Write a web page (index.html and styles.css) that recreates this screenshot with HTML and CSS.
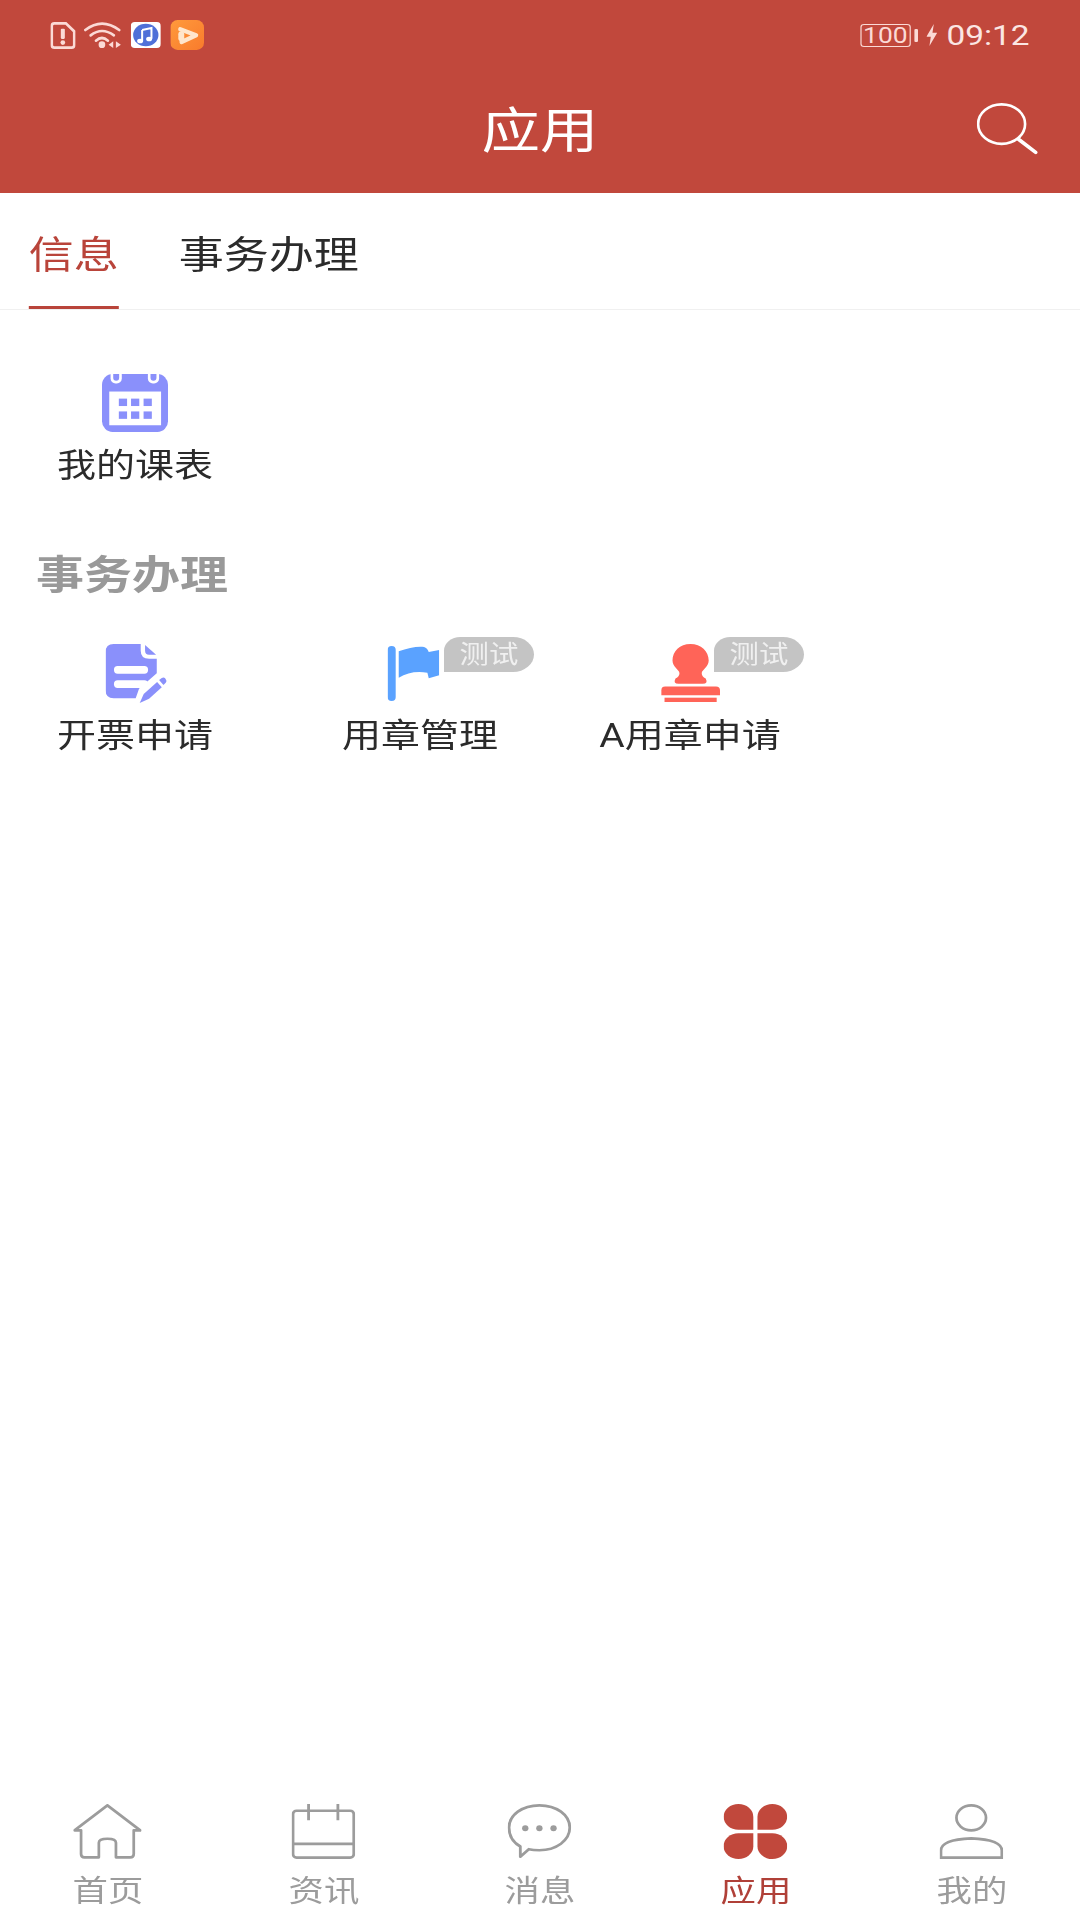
FILE: index.html
```html
<!DOCTYPE html>
<html lang="zh">
<head>
    <meta charset="UTF-8">
    <meta name="viewport" content="width=device-width, initial-scale=1.0">
    <title>应用</title>
    <link rel="stylesheet" href="styles.css">
</head>
<body>
    <div class="app">
        <header class="cabecera">
            <div class="estado">
                <div class="estado-izq">
                    <svg class="ico-sim" viewBox="0 0 75 80" preserveAspectRatio="none">
                        <path d="M12 4H46L71 28V68Q71 76 63 76H12Q4 76 4 68V12Q4 4 12 4Z" fill="none" stroke="#fbdad6" stroke-width="8"/>
                        <rect x="31" y="20" width="12" height="30" rx="3" fill="#fbdad6"/>
                        <circle cx="37" cy="61" r="7" fill="#fbdad6"/>
                    </svg>
                    <svg class="ico-wifi" viewBox="0 0 112 78" preserveAspectRatio="none">
                        <g fill="none" stroke="#fbdad6" stroke-width="8" stroke-linecap="round">
                            <path d="M4 24Q54 -14 106 24"/>
                            <path d="M20 40Q54 14 90 40"/>
                            <path d="M36 56Q54 40 72 56"/>
                        </g>
                        <circle cx="54" cy="68" r="10" fill="#fbdad6"/>
                        <path d="M74 68L88 58V78ZM96 58L111 68L96 78Z" fill="#fbdad6"/>
                    </svg>
                    <svg class="ico-musica" viewBox="0 0 90 78" preserveAspectRatio="none">
                        <rect width="90" height="78" rx="12" fill="#fff"/>
                        <ellipse cx="45" cy="39" rx="38" ry="34" fill="#4f70d8"/>
                        <path d="M34 24L62 18V50" fill="none" stroke="#fff" stroke-width="6"/>
                        <path d="M34 24V56" fill="none" stroke="#fff" stroke-width="6"/>
                        <ellipse cx="28" cy="57" rx="9" ry="7" fill="#fff"/>
                        <ellipse cx="55" cy="51" rx="9" ry="7" fill="#fff"/>
                    </svg>
                    <svg class="ico-video" viewBox="0 0 102 90" preserveAspectRatio="none">
                        <defs>
                            <linearGradient id="naranja" x1="0" y1="0" x2="1" y2="1">
                                <stop offset="0" stop-color="#ff9a3c"/>
                                <stop offset="1" stop-color="#f97b2c"/>
                            </linearGradient>
                        </defs>
                        <rect width="102" height="90" rx="22" fill="url(#naranja)"/>
                        <path d="M30 28L78 46L34 66" fill="none" stroke="#ffe6cc" stroke-width="13" stroke-linejoin="round" stroke-linecap="round"/>
                        <rect x="24" y="34" width="18" height="30" rx="9" fill="#ffe6cc"/>
                    </svg>
                </div>
                <div class="estado-der">
                    <span class="bateria">100</span>
                    <span class="bateria-punta"></span>
                    <svg class="ico-rayo" viewBox="0 0 32 66" preserveAspectRatio="none">
                        <path d="M22 0L0 38H13L9 66L32 26H18Z" fill="#fbdad6"/>
                    </svg>
                    <span class="hora">09:12</span>
                </div>
            </div>
            <div class="barra">
                <span></span>
                <h1>应用</h1>
                <svg class="ico-buscar" viewBox="0 0 185 158" preserveAspectRatio="none">
                    <ellipse cx="75" cy="64" rx="71" ry="60" fill="none" stroke="#fff" stroke-width="8"/>
                    <path d="M126 110L178 150" stroke="#fff" stroke-width="11" stroke-linecap="round"/>
                </svg>
            </div>
        </header>

        <nav class="pestanas">
            <a class="pestana activa">信息</a>
            <a class="pestana">事务办理</a>
        </nav>

        <main class="contenido">
            <div class="fila">
                <div class="item">
                    <div class="icono">
                        <svg class="ico-horario" viewBox="0 0 200 172" preserveAspectRatio="none">
                            <rect width="200" height="172" rx="32" fill="#8a90fb"/>
                            <rect x="26" y="-12" width="34" height="40" rx="15" fill="#fff"/>
                            <rect x="34" y="-12" width="18" height="32" rx="9" fill="#8a90fb"/>
                            <rect x="139" y="-12" width="34" height="40" rx="15" fill="#fff"/>
                            <rect x="147" y="-12" width="18" height="32" rx="9" fill="#8a90fb"/>
                            <rect x="22" y="52" width="157" height="100" fill="#fff"/>
                            <g fill="#8a90fb">
                                <rect x="51" y="73" width="25" height="22"/>
                                <rect x="88" y="73" width="25" height="22"/>
                                <rect x="126" y="73" width="25" height="22"/>
                                <rect x="51" y="111" width="25" height="22"/>
                                <rect x="88" y="111" width="25" height="22"/>
                                <rect x="126" y="111" width="25" height="22"/>
                            </g>
                        </svg>
                    </div>
                    <span class="etiqueta">我的课表</span>
                </div>
            </div>

            <h2 class="seccion">事务办理</h2>

            <div class="fila">
                <div class="item">
                    <div class="icono">
                        <svg class="ico-factura" viewBox="0 0 183 177" preserveAspectRatio="none">
                            <path d="M24 0H105V20Q105 44 130 44H153V88L100 134L90 163H24Q0 163 0 139V24Q0 0 24 0Z" fill="#8a90fb"/>
                            <path d="M118 3L151 32H130Q118 32 118 20Z" fill="#8a90fb"/>
                            <rect x="25" y="66" width="102" height="23" rx="11" fill="#fff"/>
                            <rect x="25" y="109" width="102" height="23" rx="11" fill="#fff"/>
                            <path d="M102 177L114 150L154 114L168 130L130 164Z" fill="#8a90fb"/>
                            <path d="M160 108L168 102Q174 98 178 103L181 108Q184 112 179 117L173 123Z" fill="#8a90fb"/>
                        </svg>
                    </div>
                    <span class="etiqueta">开票申请</span>
                </div>
                <div class="item">
                    <div class="icono">
                        <svg class="ico-bandera" viewBox="0 0 153 165" preserveAspectRatio="none">
                            <rect width="24" height="165" rx="12" fill="#5aa2ff"/>
                            <path d="M33 16C60 6 90 0 108 3Q118 6 122 18L153 12V88L122 97L118 80Q70 72 33 95Z" fill="#5aa2ff"/>
                        </svg>
                        <span class="insignia">测试</span>
                    </div>
                    <span class="etiqueta">用章管理</span>
                </div>
                <div class="item">
                    <div class="icono">
                        <svg class="ico-sello" viewBox="0 0 177 175" preserveAspectRatio="none">
                            <path d="M88 0C120 0 143 22 143 50C143 70 122 78 122 88Q122 98 134 104Q142 120 125 120H52Q35 120 43 104Q55 98 55 88C55 78 34 70 34 50C34 22 56 0 88 0Z" fill="#ff6458"/>
                            <path d="M12 128H165Q177 128 177 140V155H0V140Q0 128 12 128Z" fill="#ff6458"/>
                            <rect x="10" y="162" width="157" height="13" fill="#ff6458"/>
                        </svg>
                        <span class="insignia">测试</span>
                    </div>
                    <span class="etiqueta">A用章申请</span>
                </div>
            </div>
        </main>

        <footer class="menu">
            <a class="menu-item">
                <svg class="ico-menu ico-casa" viewBox="0 0 200 163" preserveAspectRatio="none">
                    <path d="M4 78L100 4L196 78H177V148Q177 158 167 158H125V115Q125 103 100 103Q75 103 75 115V158H33Q23 158 23 148V78Z" fill="none" stroke="#9c9c9c" stroke-width="8" stroke-linejoin="round"/>
                </svg>
                <span>首页</span>
            </a>
            <a class="menu-item">
                <svg class="ico-menu" viewBox="0 0 180 163" preserveAspectRatio="none">
                    <rect x="4" y="20" width="172" height="139" rx="10" fill="none" stroke="#9c9c9c" stroke-width="8"/>
                    <path d="M4 118H176M48 0V48M131 0V48" stroke="#9c9c9c" stroke-width="8"/>
                </svg>
                <span>资讯</span>
            </a>
            <a class="menu-item">
                <svg class="ico-menu" viewBox="0 0 180 163" preserveAspectRatio="none">
                    <path d="M36 126C12 112 4 92 4 70C4 32 42 4 90 4C138 4 176 32 176 70C176 108 138 137 90 137C78 137 68 136 60 134L36 156Z" fill="none" stroke="#9c9c9c" stroke-width="8" stroke-linejoin="round"/>
                    <circle cx="50" cy="72" r="9" fill="#9c9c9c"/>
                    <circle cx="90" cy="72" r="9" fill="#9c9c9c"/>
                    <circle cx="130" cy="72" r="9" fill="#9c9c9c"/>
                </svg>
                <span>消息</span>
            </a>
            <a class="menu-item activo">
                <svg class="ico-menu" viewBox="0 0 184 163" preserveAspectRatio="none">
                    <g fill="#c1483c">
                        <path d="M86 76H43A43 38 0 1 1 86 38Z"/>
                        <path d="M98 76H141A43 38 0 1 0 98 38Z"/>
                        <path d="M86 87H43A43 38 0 1 0 86 125Z"/>
                        <path d="M98 87H141A43 38 0 1 1 98 125Z"/>
                    </g>
                </svg>
                <span>应用</span>
            </a>
            <a class="menu-item">
                <svg class="ico-menu" viewBox="0 0 185 163" preserveAspectRatio="none">
                    <ellipse cx="92" cy="41" rx="43" ry="37" fill="none" stroke="#9c9c9c" stroke-width="8"/>
                    <path d="M4 159V138Q4 106 92 102Q181 106 181 138V159Z" fill="none" stroke="#9c9c9c" stroke-width="8"/>
                </svg>
                <span>我的</span>
            </a>
        </footer>
    </div>
</body>
</html>
```

FILE: styles.css
```css
html, body {
    margin: 0;
    background: #fff;
    overflow: hidden;
}
/* la captura original esta estirada en horizontal: se maqueta a 900 y se escala */
.app {
    width: 900px;
    height: 1920px;
    display: flex;
    flex-direction: column;
    transform: scaleX(1.2);
    transform-origin: left top;
    font-family: Roboto, "Noto Sans CJK SC", sans-serif;
}
.cabecera {
    height: 193px;
    background: #c1483c;
    color: #fff;
}
.estado {
    height: 70px;
    padding: 0 42px;
    display: flex;
    justify-content: space-between;
    align-items: center;
}
.estado-izq, .estado-der {
    display: flex;
    align-items: center;
}
.estado-izq {
    gap: 7px;
}
.ico-sim { width: 21px; height: 27px; }
.ico-wifi { width: 31px; height: 26px; }
.ico-musica { width: 25px; height: 26px; margin-left: 1px; }
.ico-video { width: 28px; height: 30px; margin-left: 1px; }
.bateria {
    width: 42px;
    height: 23px;
    box-sizing: border-box;
    border: 1px solid #fbdad6;
    border-radius: 3px;
    color: #fbdad6;
    font-size: 22px;
    line-height: 21px;
    text-align: center;
}
.bateria-punta {
    width: 3px;
    height: 13px;
    margin-left: 3px;
    background: #fbdad6;
    border-radius: 1px;
}
.ico-rayo {
    width: 9px;
    height: 22px;
    margin-left: 7px;
}
.hora {
    margin-left: 8px;
    font-size: 27.8px;
    color: #fbe6e3;
}
.barra {
    height: 123px;
    padding-right: 35px;
    display: grid;
    grid-template-columns: 1fr auto 1fr;
    align-items: center;
}
.barra h1 {
    margin: 0;
    padding: 0 0 10px 35px;
    font-size: 48.5px;
    font-weight: 400;
}
.ico-buscar {
    width: 51px;
    height: 52px;
    justify-self: end;
    margin-bottom: 6px;
}
.pestanas {
    height: 117px;
    box-sizing: border-box;
    padding-left: 24px;
    display: flex;
    gap: 50px;
    border-bottom: 1px solid #f0f0f0;
}
.pestana {
    height: 116px;
    box-sizing: border-box;
    padding-top: 12px;
    font-size: 37.5px;
    line-height: 101px;
    color: #2b2b2b;
}
.activa {
    color: #b9443a;
    border-bottom: 3px solid #b9443a;
}
.contenido {
    flex: 1;
    padding-top: 63px;
}
.fila {
    display: grid;
    grid-template-columns: 225px 250px 200px;
}
.item {
    display: flex;
    flex-direction: column;
    align-items: center;
    gap: 12px;
}
.icono {
    width: 56px;
    height: 60px;
    position: relative;
    display: flex;
    align-items: center;
    justify-content: center;
}
.ico-horario { width: 55px; height: 58px; }
.ico-factura { width: 51px; height: 59px; margin-left: 2px; }
.ico-bandera { width: 43px; height: 55px; margin-left: -12px; }
.ico-sello { width: 49px; height: 58px; }
.etiqueta {
    font-size: 32.5px;
    line-height: 42px;
    color: #2b2b2b;
    white-space: nowrap;
}
.insignia {
    position: absolute;
    left: 48px;
    top: -6px;
    width: 75px;
    height: 35px;
    background: #c4c4c4;
    border-radius: 14px 18px 18px 0;
    color: #f0f0f0;
    font-size: 24.5px;
    line-height: 35px;
    text-align: center;
    white-space: nowrap;
}
.seccion {
    margin: 64px 0 42px 30px;
    font-size: 40px;
    line-height: 50px;
    font-weight: 700;
    color: #999;
}
.menu {
    height: 120px;
    box-sizing: border-box;
    padding-top: 4px;
    display: grid;
    grid-template-columns: repeat(5, 1fr);
}
.menu-item {
    display: flex;
    flex-direction: column;
    align-items: center;
    gap: 14px;
    font-size: 29.5px;
    line-height: 36px;
    color: #9c9c9c;
}
.ico-menu {
    width: 53px;
    height: 55px;
    margin-right: 1.5px;
}
.ico-casa {
    width: 57px;
}
.activo {
    color: #b04038;
}
```
